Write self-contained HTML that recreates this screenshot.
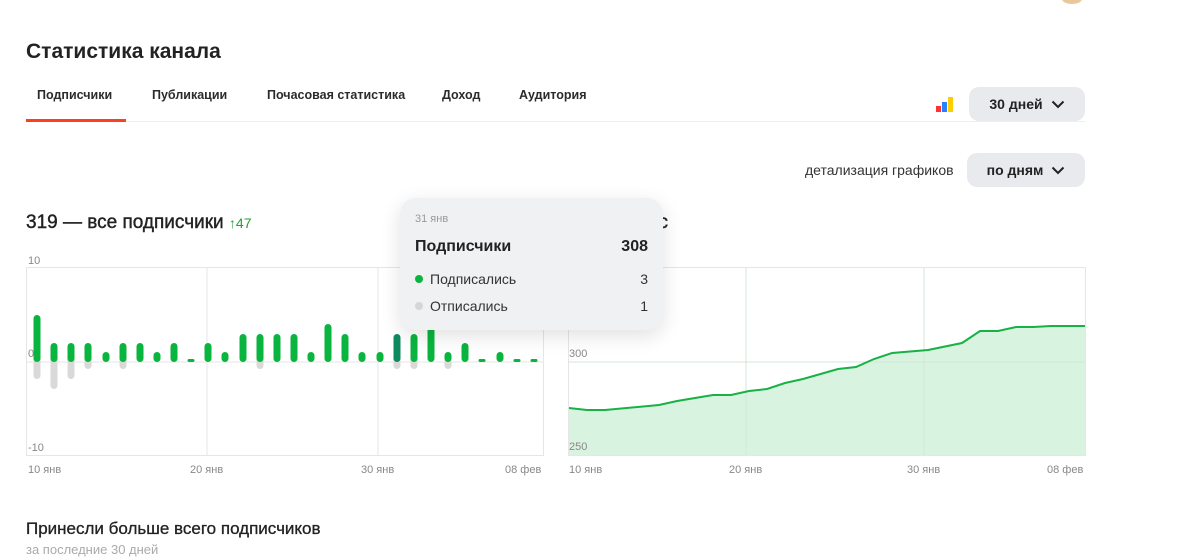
<!DOCTYPE html>
<html><head><meta charset="utf-8"><style>
*{margin:0;padding:0;box-sizing:border-box}
body{width:1200px;height:547px;overflow:hidden;background:#fff;font-family:"Liberation Sans","DejaVu Sans",sans-serif;color:#1f1f1f;position:relative}
.a{position:absolute;white-space:nowrap}
.tab{position:absolute;top:88px;font-size:12.5px;font-weight:bold;color:#2b2b2b}
.btn{position:absolute;background:#e9eaee;border-radius:10px;font-size:14px;font-weight:bold;color:#222;display:flex;align-items:center;justify-content:center;gap:8px}
.ax{position:absolute;font-size:11px;color:#888}
</style></head><body>
<div class="a" style="left:1062px;top:-6px;width:20px;height:10px;border-radius:50%;background:#e8c89a"></div>
<div class="a" style="left:26px;top:40px;font-size:21px;font-weight:bold;color:#222">Статистика канала</div>
<div class="tab" style="left:37px">Подписчики</div>
<div class="tab" style="left:152px">Публикации</div>
<div class="tab" style="left:267px">Почасовая статистика</div>
<div class="tab" style="left:442px">Доход</div>
<div class="tab" style="left:519px">Аудитория</div>
<div class="a" style="left:26px;top:121px;width:1059px;height:1px;background:#eee"></div>
<div class="a" style="left:26px;top:119px;width:100px;height:3px;background:#fc3f1d"></div>
<svg class="a" style="left:936px;top:96px" width="18" height="16"><rect x="0" y="10" width="5" height="6" fill="#f33"/><rect x="6" y="6" width="5" height="10" fill="#2a7fff"/><rect x="12" y="1" width="5" height="15" fill="#fc0"/></svg>
<div class="btn" style="left:969px;top:87px;width:116px;height:34px">30 дней <svg width="14" height="9"><path d="M1.5 1.5 L7 7 L12.5 1.5" stroke="#222" stroke-width="2" fill="none"/></svg></div>
<div class="a" style="left:805px;top:162px;font-size:14px;color:#333">детализация графиков</div>
<div class="btn" style="left:967px;top:153px;width:118px;height:34px">по дням <svg width="14" height="9"><path d="M1.5 1.5 L7 7 L12.5 1.5" stroke="#222" stroke-width="2" fill="none"/></svg></div>
<div class="a" style="left:26px;top:212px;font-size:19px;color:#222;-webkit-text-stroke:0.4px #222">319 — все подписчики <span style="font-size:14px;color:#21a038;-webkit-text-stroke:0">↑47</span></div>
<div class="a" style="right:532px;top:212px;font-size:19px;color:#222;-webkit-text-stroke:0.4px #222">Подписчиков сейчас</div>

<svg class="a" style="left:0;top:0" width="1200" height="547">
<rect x="26.5" y="267.5" width="517" height="188" fill="none" stroke="#e6e6e6"/>
<line x1="207" y1="268" x2="207" y2="455" stroke="#e6e6e6"/>
<line x1="378" y1="268" x2="378" y2="455" stroke="#e6e6e6"/>
<line x1="26" y1="362" x2="543" y2="362" stroke="#e6e6e6"/>
<g fill="#d9d9d9">
<rect x="33.5" y="355" width="7" height="24" rx="3.5"/>
<rect x="50.5" y="355" width="7" height="34" rx="3.5"/>
<rect x="67.5" y="355" width="7" height="24" rx="3.5"/>
<rect x="84.5" y="355" width="7" height="14" rx="3.5"/>
<rect x="119.5" y="355" width="7" height="14" rx="3.5"/>
<rect x="256.5" y="355" width="7" height="14" rx="3.5"/>
<rect x="393.5" y="355" width="7" height="14" rx="3.5"/>
<rect x="410.5" y="355" width="7" height="14" rx="3.5"/>
<rect x="444.5" y="355" width="7" height="14" rx="3.5"/>
</g>
<g fill="#09b53e">
<rect x="33.5" y="315" width="7" height="47" rx="3.5"/>
<rect x="50.5" y="343" width="7" height="19" rx="3.5"/>
<rect x="67.5" y="343" width="7" height="19" rx="3.5"/>
<rect x="84.5" y="343" width="7" height="19" rx="3.5"/>
<rect x="102.5" y="352" width="7" height="10" rx="3.5"/>
<rect x="119.5" y="343" width="7" height="19" rx="3.5"/>
<rect x="136.5" y="343" width="7" height="19" rx="3.5"/>
<rect x="153.5" y="352" width="7" height="10" rx="3.5"/>
<rect x="170.5" y="343" width="7" height="19" rx="3.5"/>
<rect x="187.5" y="359" width="7" height="3" rx="1.5"/>
<rect x="204.5" y="343" width="7" height="19" rx="3.5"/>
<rect x="221.5" y="352" width="7" height="10" rx="3.5"/>
<rect x="239.5" y="334" width="7" height="28" rx="3.5"/>
<rect x="256.5" y="334" width="7" height="28" rx="3.5"/>
<rect x="273.5" y="334" width="7" height="28" rx="3.5"/>
<rect x="290.5" y="334" width="7" height="28" rx="3.5"/>
<rect x="307.5" y="352" width="7" height="10" rx="3.5"/>
<rect x="324.5" y="324" width="7" height="38" rx="3.5"/>
<rect x="341.5" y="334" width="7" height="28" rx="3.5"/>
<rect x="358.5" y="352" width="7" height="10" rx="3.5"/>
<rect x="376.5" y="352" width="7" height="10" rx="3.5"/>
<rect x="393.5" y="334" width="7" height="28" rx="3.5" fill="#0f8a5f"/>
<rect x="410.5" y="334" width="7" height="28" rx="3.5"/>
<rect x="427.5" y="324" width="7" height="38" rx="3.5"/>
<rect x="444.5" y="352" width="7" height="10" rx="3.5"/>
<rect x="461.5" y="343" width="7" height="19" rx="3.5"/>
<rect x="478.5" y="359" width="7" height="3" rx="1.5"/>
<rect x="496.5" y="352" width="7" height="10" rx="3.5"/>
<rect x="513.5" y="359" width="7" height="3" rx="1.5"/>
<rect x="530.5" y="359" width="7" height="3" rx="1.5"/>
</g>
<rect x="568.5" y="267.5" width="517" height="188" fill="none" stroke="#e6e6e6"/>
<path d="M569 408 L587 410 L605 410 L659 405 L677 401 L695 398 L713 395 L731 395 L749 391 L767 389 L785 383 L803 379 L838 369 L856 367 L874 359 L892 353 L928 350 L962 343 L980 331 L998 331 L1016 327 L1033 327 L1051 326 L1085 326 L1085 455 L569 455 Z" fill="#d8f3e0"/>
<line x1="746" y1="268" x2="746" y2="455" stroke="#d4e4d8"/>
<line x1="924" y1="268" x2="924" y2="455" stroke="#d4e4d8"/>
<line x1="568" y1="362" x2="1085" y2="362" stroke="#d4e4d8"/>
<path d="M569 408 L587 410 L605 410 L659 405 L677 401 L695 398 L713 395 L731 395 L749 391 L767 389 L785 383 L803 379 L838 369 L856 367 L874 359 L892 353 L928 350 L962 343 L980 331 L998 331 L1016 327 L1033 327 L1051 326 L1085 326" fill="none" stroke="#18b145" stroke-width="2"/>
</svg>
<div class="ax" style="left:28px;top:255px;background:#fff">10</div>
<div class="ax" style="left:28px;top:348px">0</div>
<div class="ax" style="left:28px;top:442px">-10</div>
<div class="ax" style="left:569px;top:348px">300</div>
<div class="ax" style="left:569px;top:441px">250</div>
<div class="ax" style="left:28px;top:464px">10 янв</div>
<div class="ax" style="left:190px;top:464px">20 янв</div>
<div class="ax" style="left:361px;top:464px">30 янв</div>
<div class="ax" style="left:505px;top:464px">08 фев</div>
<div class="ax" style="left:569px;top:464px">10 янв</div>
<div class="ax" style="left:729px;top:464px">20 янв</div>
<div class="ax" style="left:907px;top:464px">30 янв</div>
<div class="ax" style="left:1047px;top:464px">08 фев</div>

<div class="a" style="left:400px;top:198px;width:263px;height:132px;background:#f0f1f3;border-radius:16px;box-shadow:0 6px 20px rgba(0,0,0,.12)">
<div class="a" style="left:15px;top:15px;font-size:11px;color:#999">31 янв</div>
<div class="a" style="left:15px;top:40px;font-size:16px;font-weight:bold;color:#222">Подписчики</div>
<div class="a" style="right:15px;top:40px;font-size:16px;font-weight:bold;color:#222">308</div>
<div class="a" style="left:15px;top:77px;width:8px;height:8px;border-radius:50%;background:#09b53e"></div>
<div class="a" style="left:30px;top:73px;font-size:14px;color:#333">Подписались</div>
<div class="a" style="right:15px;top:73px;font-size:14px;color:#333">3</div>
<div class="a" style="left:15px;top:104px;width:8px;height:8px;border-radius:50%;background:#d6d6d6"></div>
<div class="a" style="left:30px;top:100px;font-size:14px;color:#333">Отписались</div>
<div class="a" style="right:15px;top:100px;font-size:14px;color:#333">1</div>
</div>

<div class="a" style="left:26px;top:519px;font-size:17px;color:#222;-webkit-text-stroke:0.3px #222">Принесли больше всего подписчиков</div>
<div class="a" style="left:26px;top:542px;font-size:13px;color:#aaa">за последние 30 дней</div>
</body></html>
